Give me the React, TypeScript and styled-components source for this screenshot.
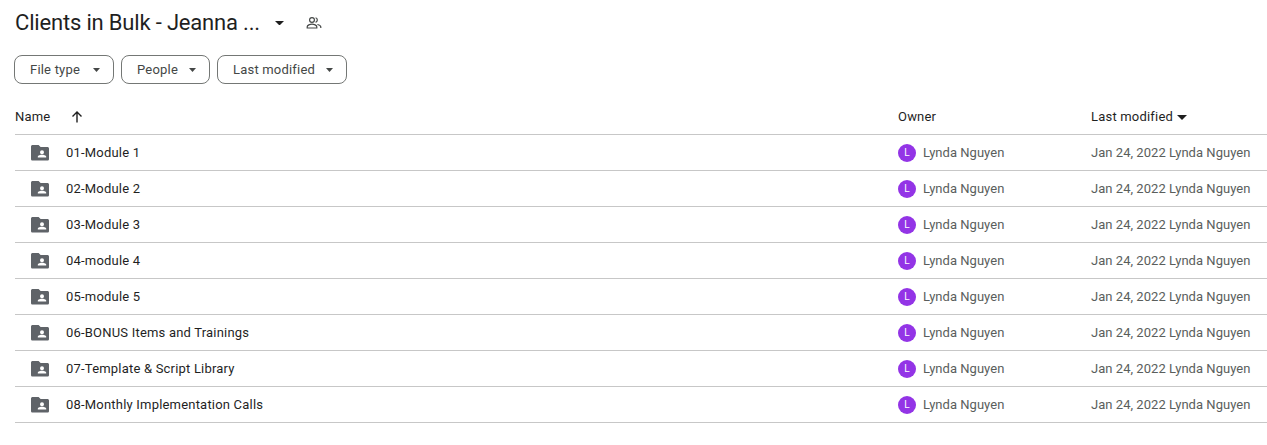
import React from "react";
import styled, { createGlobalStyle } from "styled-components";

const Global = createGlobalStyle`
  html, body { margin: 0; padding: 0; background: #fff; }
  body { font-family: Roboto, "Open Sans", sans-serif; color: #1f1f1f; overflow: hidden; }
`;

const Page = styled.div`
  width: 1267px;
  height: 445px;
  padding-left: 15px;
  box-sizing: border-box;
  overflow: hidden;
`;

const TitleBar = styled.div`
  display: flex;
  align-items: center;
  height: 46px;
`;

const Title = styled.h1`
  margin: 0;
  font: 400 22px/28px Roboto, sans-serif;
  letter-spacing: -0.18px;
  color: #1f1f1f;
  width: 260px;
  white-space: nowrap;
`;

const TitleCaret = styled.svg`
  width: 9px;
  height: 4.5px;
  margin-right: 22px;
  fill: #1f1f1f;
`;

const Filters = styled.div`
  display: flex;
  gap: 7px;
  margin: 9px 0 0 -1px;
`;

const Filter = styled.button`
  display: flex;
  align-items: center;
  box-sizing: border-box;
  height: 29px;
  width: ${(p) => p.$width}px;
  padding: 0 0 0 15px;
  border: 1px solid #747775;
  border-radius: 8px;
  background: #fff;
  font: 400 13px/20px Roboto, sans-serif;
  letter-spacing: 0.2px;
  color: #444746;
  cursor: pointer;
`;

const FilterCaret = styled.svg`
  width: 7px;
  height: 4px;
  margin-left: auto;
  margin-right: 13px;
  fill: #444746;
`;

const Row = styled.div`
  display: grid;
  grid-template-columns: 883px 193px 1fr;
  align-items: center;
  box-sizing: border-box;
  height: ${(p) => (p.$head ? 51 : 36)}px;
  padding-top: ${(p) => (p.$head ? 16 : 0)}px;
  border-bottom: 1px solid #c7c7c7;
  font: 400 13px/20px Roboto, sans-serif;
  letter-spacing: 0.2px;
  white-space: nowrap;
`;

const HeaderCell = styled.div`
  display: flex;
  align-items: center;
  color: #1f1f1f;
`;

const SortArrow = styled.svg`
  width: 14px;
  height: 14px;
  margin-left: 20px;
  fill: none;
  stroke: #1f1f1f;
  stroke-width: 1.4;
`;

const HeaderCaret = styled.svg`
  width: 10px;
  height: 5px;
  margin-left: 4px;
  fill: #1f1f1f;
`;

const NameCell = styled.div`
  display: flex;
  align-items: center;
  color: #1f1f1f;
`;

const FolderIcon = styled.svg`
  width: 20px;
  height: 20px;
  margin: 0 16px 0 15px;
  fill: #5f6368;
`;

const OwnerCell = styled.div`
  display: flex;
  align-items: center;
  color: #5a5e5c;
  letter-spacing: 0.03px;
`;

const Avatar = styled.span`
  display: flex;
  align-items: center;
  justify-content: center;
  width: 18px;
  height: 18px;
  margin-right: 7px;
  border-radius: 50%;
  background: #9334e6;
  color: #fff;
  font: 400 10px/18px Roboto, sans-serif;
  letter-spacing: 0;
`;

const ModifiedCell = styled.div`
  color: #5a5e5c;
  letter-spacing: 0.04px;
`;

const Folder = () => (
  <FolderIcon viewBox="0 0 20 20">
    <path
      fillRule="evenodd"
      d="M2.600 2h6l2 2h6.800c.9 0 1.600.7 1.600 1.600v10.300c0 .9-.7 1.600-1.600 1.600H2.600c-.9 0-1.600-.7-1.600-1.600V3.600c0-.9.7-1.600 1.600-1.600zM12 7.200a2 2 0 1 0 0 4 2 2 0 0 0 0-4zM7.800 14.500h8.400v-.9c0-1.300-2.800-1.900-4.200-1.900s-4.200.6-4.200 1.900z"
    />
  </FolderIcon>
);

const names = [
  "01-Module 1",
  "02-Module 2",
  "03-Module 3",
  "04-module 4",
  "05-module 5",
  "06-BONUS Items and Trainings",
  "07-Template & Script Library",
  "08-Monthly Implementation Calls",
];

const filters = [
  { label: "File type", width: 100 },
  { label: "People", width: 89 },
  { label: "Last modified", width: 130 },
];

export default function App() {
  return (
    <Page>
      <Global />
      <TitleBar>
        <Title>Clients in Bulk - Jeanna ...</Title>
        <TitleCaret viewBox="0 0 10 5">
          <path d="M0 0h10L5 5z" />
        </TitleCaret>
        <svg width="16" height="16" viewBox="0 0 16 16" fill="none" stroke="#444746" strokeWidth="1.2">
          <circle cx="6" cy="5" r="2.400" />
          <path d="M1.200 13v-1.200c0-1.600 2.800-2.600 4.800-2.600s4.800 1 4.800 2.600V13z" />
          <path d="M9.600 2.700a2.400 2.400 0 0 1 0 4.600M11.400 9.500c1.800.4 3.400 1.200 3.400 2.400V13" />
        </svg>
      </TitleBar>
      <Filters>
        {filters.map((f) => (
          <Filter key={f.label} $width={f.width}>
            {f.label}
            <FilterCaret viewBox="0 0 7 4">
              <path d="M0 0h7L3.500 4z" />
            </FilterCaret>
          </Filter>
        ))}
      </Filters>
      <Row $head>
        <HeaderCell>
          Name
          <SortArrow viewBox="0 0 14 14">
            <path d="M7 12.500V2M2.500 6.500 7 2l4.500 4.500" />
          </SortArrow>
        </HeaderCell>
        <HeaderCell>Owner</HeaderCell>
        <HeaderCell>
          Last modified
          <HeaderCaret viewBox="0 0 10 5">
            <path d="M0 0h10L5 5z" />
          </HeaderCaret>
        </HeaderCell>
      </Row>
      {names.map((n) => (
        <Row key={n}>
          <NameCell>
            <Folder />
            {n}
          </NameCell>
          <OwnerCell>
            <Avatar>L</Avatar>
            Lynda Nguyen
          </OwnerCell>
          <ModifiedCell>Jan 24, 2022 Lynda Nguyen</ModifiedCell>
        </Row>
      ))}
    </Page>
  );
}
